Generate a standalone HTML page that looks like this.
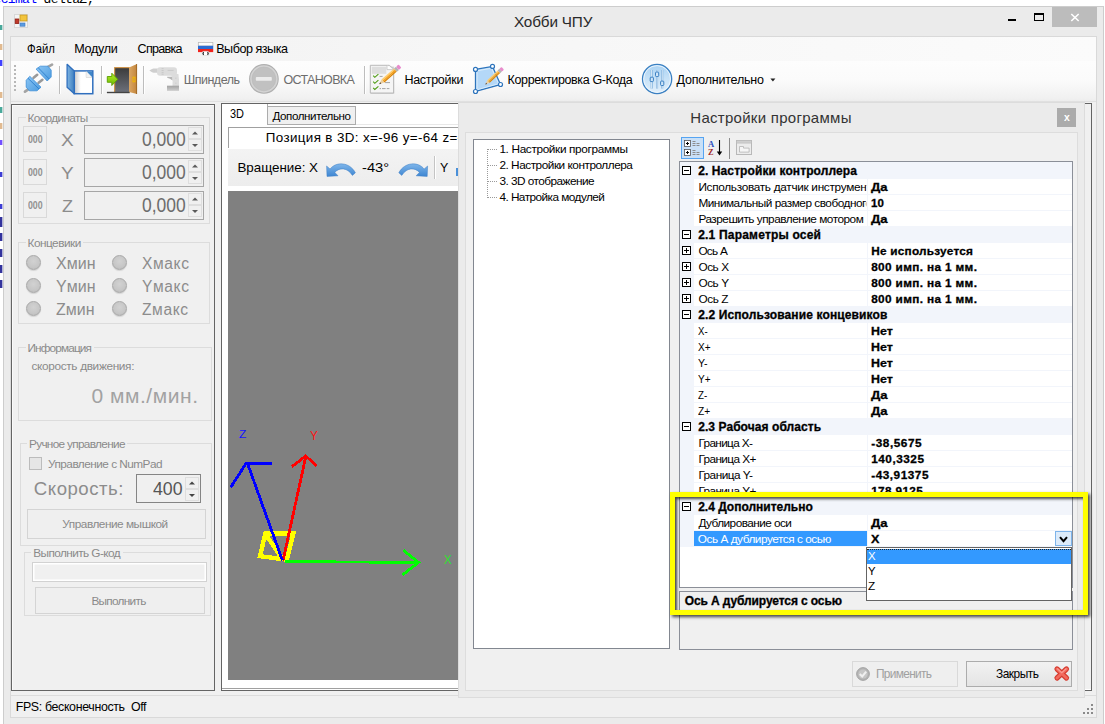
<!DOCTYPE html>
<html lang="ru"><head><meta charset="utf-8"><title>Хобби ЧПУ</title>
<style>
html,body{margin:0;padding:0}
body{width:1105px;height:724px;overflow:hidden;background:#fff;position:relative;font-family:"Liberation Sans",sans-serif}
.a{position:absolute;box-sizing:border-box}
.t{position:absolute;white-space:pre;line-height:1}
.gb{position:absolute;box-sizing:border-box;border:1px solid #dcdcdc}
.lbl{position:absolute;background:#f0f0f0;height:12px}
svg{position:absolute;overflow:visible}
</style></head>
<body>
<span class="t" style='left:-6.5px;top:-7px;font-size:13px;color:#0000ff;font-family:"Liberation Mono", monospace;letter-spacing:-0.65px;'>ecimal</span>
<span class="t" style='left:43.6px;top:-7px;font-size:13px;color:#000;font-family:"Liberation Mono", monospace;letter-spacing:-0.65px;'>deltaZ;</span>
<div class="a" style="left:0px;top:25px;width:2px;height:5px;background:#2a9a8a;opacity:.85"></div>
<div class="a" style="left:2px;top:25px;width:1px;height:5px;background:#2a9a8a;opacity:.3"></div>
<div class="a" style="left:0px;top:44px;width:2px;height:6px;background:#dcae7c;opacity:.85"></div>
<div class="a" style="left:2px;top:44px;width:1px;height:6px;background:#dcae7c;opacity:.3"></div>
<div class="a" style="left:0px;top:60px;width:2px;height:6px;background:#2020ff;opacity:.85"></div>
<div class="a" style="left:2px;top:60px;width:1px;height:6px;background:#2020ff;opacity:.3"></div>
<div class="a" style="left:0px;top:92px;width:2px;height:6px;background:#dcae7c;opacity:.85"></div>
<div class="a" style="left:2px;top:92px;width:1px;height:6px;background:#dcae7c;opacity:.3"></div>
<div class="a" style="left:0px;top:107px;width:2px;height:6px;background:#2a9a8a;opacity:.85"></div>
<div class="a" style="left:2px;top:107px;width:1px;height:6px;background:#2a9a8a;opacity:.3"></div>
<div class="a" style="left:0px;top:123px;width:2px;height:6px;background:#dcae7c;opacity:.85"></div>
<div class="a" style="left:2px;top:123px;width:1px;height:6px;background:#dcae7c;opacity:.3"></div>
<div class="a" style="left:0px;top:140px;width:2px;height:5px;background:#5a30ff;opacity:.85"></div>
<div class="a" style="left:2px;top:140px;width:1px;height:5px;background:#5a30ff;opacity:.3"></div>
<div class="a" style="left:0px;top:172px;width:2px;height:5px;background:#1c1ccc;opacity:.85"></div>
<div class="a" style="left:2px;top:172px;width:1px;height:5px;background:#1c1ccc;opacity:.3"></div>
<div class="a" style="left:0px;top:204px;width:2px;height:5px;background:#1c1ccc;opacity:.85"></div>
<div class="a" style="left:2px;top:204px;width:1px;height:5px;background:#1c1ccc;opacity:.3"></div>
<div class="a" style="left:0px;top:217px;width:2px;height:10px;background:#10108c;opacity:.85"></div>
<div class="a" style="left:2px;top:217px;width:1px;height:10px;background:#10108c;opacity:.3"></div>
<div class="a" style="left:0px;top:233px;width:2px;height:8px;background:#10108c;opacity:.85"></div>
<div class="a" style="left:2px;top:233px;width:1px;height:8px;background:#10108c;opacity:.3"></div>
<div class="a" style="left:0px;top:249px;width:2px;height:8px;background:#10108c;opacity:.85"></div>
<div class="a" style="left:2px;top:249px;width:1px;height:8px;background:#10108c;opacity:.3"></div>
<div class="a" style="left:0px;top:265px;width:2px;height:8px;background:#10108c;opacity:.85"></div>
<div class="a" style="left:2px;top:265px;width:1px;height:8px;background:#10108c;opacity:.3"></div>
<div class="a" style="left:0px;top:280px;width:2px;height:8px;background:#10108c;opacity:.85"></div>
<div class="a" style="left:2px;top:280px;width:1px;height:8px;background:#10108c;opacity:.3"></div>
<div class="a" style="left:3px;top:6px;width:1101px;height:730px;background:#ebebeb;border:1px solid #cdcdcd"></div>
<svg style="left:14px;top:14px" width="14" height="14" viewBox="0 0 14 14">
<rect x="0.5" y="0.5" width="13" height="13" fill="#f4f4f4" stroke="#d8d8d8"/>
<rect x="6" y="1" width="7" height="6" fill="#f2c43c" stroke="#c89a20" stroke-width=".8"/>
<rect x="1.2" y="5" width="3.6" height="4.5" fill="#c0392b" stroke="#8e1c12" stroke-width=".8"/>
<rect x="6" y="9" width="5" height="3.2" fill="#5b9be0" stroke="#3a78c4" stroke-width=".6"/>
</svg>
<span class="t" style='left:514.0px;top:14px;font-size:15.3px;color:#2a2a2a;letter-spacing:-0.17px;'>Хобби ЧПУ</span>
<div class="a" style="left:1008px;top:19px;width:8px;height:2px;background:#000"></div>
<div class="a" style="left:1034px;top:13px;width:10px;height:8px;border:1px solid #000;border-top-width:2px"></div>
<div class="a" style="left:1052px;top:7px;width:45px;height:20px;background:#bcbcbc"></div>
<svg style="left:1071px;top:14px" width="8" height="7" viewBox="0 0 8 7"><path d="M0.3 0 L7.7 7 M7.7 0 L0.3 7" stroke="#fff" stroke-width="1.6" fill="none"/></svg>
<div class="a" style="left:10px;top:36px;width:1087px;height:682px;background:#f0f0f0;border:1px solid #d9d9d9"></div>
<div class="a" style="left:11px;top:37px;width:1085px;height:24px;background:linear-gradient(90deg,#f1f1f1,#f6f6f6 40%,#fbfbfb)"></div>
<span class="t" style='left:26.6px;top:43px;font-size:12.6px;color:#000;transform-origin:0 50%;transform:scaleX(0.901);'>Файл</span>
<span class="t" style='left:74.3px;top:43px;font-size:12.6px;color:#000;letter-spacing:-0.33px;'>Модули</span>
<span class="t" style='left:137.6px;top:43px;font-size:12.6px;color:#000;letter-spacing:-0.75px;'>Справка</span>
<span class="t" style='left:216.2px;top:43px;font-size:12.6px;color:#000;letter-spacing:-0.48px;'>Выбор языка</span>
<svg style="left:0;top:0" width="1105" height="724" viewBox="0 0 1105 724">
<rect x="198.3" y="42.4" width="14.6" height="3.6" fill="#fcfcfc" stroke="#b4b4b4" stroke-width=".7"/>
<rect x="198" y="45.8" width="15.2" height="3.3" fill="#2b6bd2"/>
<rect x="198" y="49" width="15.2" height="3.1" fill="#f0221c"/>
<rect x="202.4" y="51.3" width="6.4" height="4.2" rx="1" fill="#fff" stroke="#c8c8c8" stroke-width=".4"/>
<path d="M203.6 52 q-1.2 1.4 0 2.8 M207.6 52 q1.2 1.4 0 2.8" stroke="#111" stroke-width="1.1" fill="none"/>
</svg>
<div class="a" style="left:11px;top:61px;width:1085px;height:41px;background:linear-gradient(#fdfdfd 0%,#fbfbfb 45%,#f1f1f1 90%,#ebebeb 100%)"></div>
<div class="a" style="left:11px;top:101px;width:1085px;height:1px;background:#e0e0e0"></div>
<div class="a" style="left:14px;top:65px;width:2px;height:2px;background:#b8b8b8"></div>
<div class="a" style="left:14px;top:69px;width:2px;height:2px;background:#b8b8b8"></div>
<div class="a" style="left:14px;top:73px;width:2px;height:2px;background:#b8b8b8"></div>
<div class="a" style="left:14px;top:77px;width:2px;height:2px;background:#b8b8b8"></div>
<div class="a" style="left:14px;top:81px;width:2px;height:2px;background:#b8b8b8"></div>
<div class="a" style="left:14px;top:85px;width:2px;height:2px;background:#b8b8b8"></div>
<div class="a" style="left:14px;top:89px;width:2px;height:2px;background:#b8b8b8"></div>
<div class="a" style="left:59px;top:66px;width:1px;height:28px;background:#bdbdbd"></div>
<div class="a" style="left:60px;top:66px;width:1px;height:28px;background:#fff"></div>
<div class="a" style="left:101px;top:66px;width:1px;height:28px;background:#bdbdbd"></div>
<div class="a" style="left:102px;top:66px;width:1px;height:28px;background:#fff"></div>
<div class="a" style="left:143px;top:66px;width:1px;height:28px;background:#bdbdbd"></div>
<div class="a" style="left:144px;top:66px;width:1px;height:28px;background:#fff"></div>
<div class="a" style="left:364px;top:66px;width:1px;height:28px;background:#bdbdbd"></div>
<div class="a" style="left:365px;top:66px;width:1px;height:28px;background:#fff"></div>
<svg style="left:0;top:0" width="1105" height="724" viewBox="0 0 1105 724">
<defs>
<linearGradient id="gbl" x1="0" y1="0" x2="1" y2="1"><stop offset="0" stop-color="#8cc6f4"/><stop offset="1" stop-color="#4a9be0"/></linearGradient>
<linearGradient id="gcov" x1="0" y1="0" x2="1" y2="0"><stop offset="0" stop-color="#7db4e2"/><stop offset="1" stop-color="#3f7fbf"/></linearGradient>
<linearGradient id="gpage" x1="0" y1="0" x2="1" y2="0"><stop offset="0" stop-color="#c9c9c9"/><stop offset=".35" stop-color="#fff"/><stop offset="1" stop-color="#fff"/></linearGradient>
<linearGradient id="gdark" x1="0" y1="0" x2="0" y2="1"><stop offset="0" stop-color="#3c3c3c"/><stop offset="1" stop-color="#6c707a"/></linearGradient>
<linearGradient id="gdoor" x1="0" y1="0" x2="1" y2="0"><stop offset="0" stop-color="#dba662"/><stop offset=".8" stop-color="#c88c44"/><stop offset="1" stop-color="#a86e28"/></linearGradient>
<linearGradient id="ggrn" x1="0" y1="0" x2="0" y2="1"><stop offset="0" stop-color="#b6ee2a"/><stop offset="1" stop-color="#6bb800"/></linearGradient>
<linearGradient id="gbat" x1="0" y1="0" x2="0" y2="1"><stop offset="0" stop-color="#a2a2a2"/><stop offset="1" stop-color="#cfcfcf"/></linearGradient>
<linearGradient id="gstop" x1="0" y1="0" x2="0" y2="1"><stop offset="0" stop-color="#cfcfcf"/><stop offset="1" stop-color="#bcbcbc"/></linearGradient>
<linearGradient id="gcirc" x1="0" y1="0" x2="0" y2="1"><stop offset="0" stop-color="#a9d2f3"/><stop offset="1" stop-color="#e4f1fb"/></linearGradient>
</defs>
<!-- plug -->
<g>
<path d="M48.4 66.6 L52 64.6" stroke="#a4a4a4" stroke-width="2.8" stroke-linecap="round"/>
<path d="M25 91.6 L28.2 89.4" stroke="#a4a4a4" stroke-width="2.8" stroke-linecap="round"/>
<path d="M33.6 77.8 L37.2 74.8 M38.6 82.8 L42.4 79.8" stroke="#9a9a9a" stroke-width="2.6" stroke-linecap="round"/>
<polygon points="36.1,69.1 40.3,66.2 47.9,66.2 51.2,70.1 51.2,77 47.2,81" fill="url(#gbl)" stroke="#3f8fd8" stroke-width=".8"/>
<path d="M38.3 67.8 L49.2 79" stroke="#2f7fcc" stroke-width=".9"/>
<polygon points="29.8,76.3 41,87.2 37,90.8 29.4,90.8 26.2,87.2 26.2,80.3" fill="url(#gbl)" stroke="#3f8fd8" stroke-width=".8"/>
<path d="M28 78.3 L39 89" stroke="#2f7fcc" stroke-width=".9"/>
</g>
<!-- book/page -->
<g>
<rect x="74.3" y="70.9" width="18.5" height="22.8" fill="url(#gpage)" stroke="#2f6fbe" stroke-width="1.5"/>
<polygon points="86.3,71.6 92.1,71.6 92.1,77.4" fill="#3f86c8"/>
<path d="M86.3 71.6 V77.4 H92.1" fill="#f4f4f4" stroke="#b8b8b8" stroke-width=".7"/>
<polygon points="86.3,71.6 92.1,77.4 86.3,77.4" fill="#f2f2f2"/>
<polygon points="67.1,64.3 74.3,70.9 74.3,93.7 67.1,87.2" fill="url(#gcov)" stroke="#2f6fbe" stroke-width="1.3" stroke-linejoin="round"/>
</g>
<!-- door -->
<g>
<rect x="114.1" y="67.1" width="15.6" height="25" fill="#c8893a"/>
<rect x="115.2" y="68.2" width="13.8" height="24" fill="url(#gdark)"/>
<polygon points="129,67.6 137,64 137,94 129,91.9" fill="url(#gdoor)"/>
<path d="M136.6 64 V94" stroke="#a06a28" stroke-width=".9"/>
<rect x="133" y="77.2" width="2" height="4.6" fill="none" stroke="#f2b800" stroke-width="1"/>
<path d="M106.9 92.5 H129.7" stroke="#444" stroke-width="1.4"/>
<polygon points="107.3,76.5 111.8,76.5 111.8,73.2 117.8,79.3 111.8,85.5 111.8,82.3 107.3,82.3" fill="url(#ggrn)" stroke="#5a9e00" stroke-width=".9" stroke-linejoin="round"/>
</g>
<!-- drill -->
<g>
<polygon points="149.3,70.5 152,69 153.6,68.4 157.5,68.4 157.5,72.8 153.6,72.8 152,72.2" fill="#cfcfcf"/>
<rect x="157" y="67.2" width="20" height="8.6" rx="3" fill="#dcdcdc"/>
<path d="M171.4 74 H178.4 Q179.4 80 179 86.2 H172.5 Q173.5 80 171.4 75 Z" fill="#dcdcdc"/>
<path d="M167.2 76.8 H172 L172.6 80.4 Q170 78.4 167.2 77.8 Z" fill="#b6b6b6"/>
<rect x="167" y="85.7" width="12" height="5.2" fill="url(#gbat)"/>
<path d="M161.6 68.6 h2 M161.6 70.5 h2 M161.6 72.4 h2 M161.6 74.2 h2 M167.6 70.4 h6" stroke="#c4c4c4" stroke-width=".8"/>
<path d="M175 78.2 h1.6 M175 83.2 h1.6" stroke="#c8c8c8" stroke-width=".7"/>
</g>
<!-- stop -->
<g>
<circle cx="263.9" cy="78.9" r="14.3" fill="#d3d3d3" stroke="#b0b0b0" stroke-width="1.1"/>
<circle cx="263.9" cy="78.9" r="11.9" fill="#c1c1c1" stroke="#bababa" stroke-width=".6"/>
<rect x="255.8" y="77.1" width="16" height="3.7" rx=".8" fill="#ececec"/>
</g>
<!-- settings (checklist + pencil) -->
<g>
<rect x="370.6" y="66.6" width="23.6" height="27.2" fill="#a8a8a8" opacity=".45"/>
<path d="M370.3 65.3 H389.3 L393.6 69 V93 H370.3 Z" fill="#f5f5f5" stroke="#b2b2b2" stroke-width=".9"/>
<rect x="371.8" y="66.8" width="14.5" height="7" fill="#dedede"/>
<path d="M387 65.6 V69.6 H393" fill="#fff" stroke="#bdbdbd" stroke-width=".7"/>
<path d="M373.2 75.6 l1.6 1.7 l3.6 -3.2 M373.2 81.6 l1.6 1.7 l3.6 -3.2 M373.2 87.8 l1.6 1.7 l3.6 -3.2" stroke="#4e9c12" stroke-width="1.1" fill="none"/>
<path d="M379.6 76.4 h3 M385 82.6 h5 M379.6 88.6 h1.4 M382 88.6 h3.6 M386.8 88.6 h2.6" stroke="#9a9a9a" stroke-width=".9"/>
<g transform="translate(379.2,84.3) rotate(-41.2) scale(1.03)">
<polygon points="0,0 5,-2 5,2" fill="#ecd0a0"/><polygon points="0,0 2,-0.8 2,0.8" fill="#4a3a2a"/>
<rect x="5" y="-2" width="16" height="1.4" fill="#ffcc6a"/><rect x="5" y="-0.6" width="16" height="1.4" fill="#f7a11a"/><rect x="5" y="0.8" width="16" height="1.2" fill="#d98200"/>
<rect x="21" y="-2.1" width="2.6" height="4.2" fill="#b4b4b4"/><rect x="23.6" y="-2.1" width="3.3" height="4.2" rx="1" fill="#e88ccc"/>
</g>
</g>
<!-- polygon + pencil -->
<g>
<polygon points="475.5,69.4 492.5,66.4 500.5,84.5 475.5,91.5" fill="#b4d8f8" stroke="#2d74bc" stroke-width="1.3"/>
<polygon points="477,70.8 491.6,68.2 498.6,83.8 477,89.8" fill="none" stroke="#e4f2fd" stroke-width=".8"/>
<g fill="#fff" stroke="#2d74bc" stroke-width="1.2"><circle cx="475.5" cy="69.4" r="2"/><circle cx="492.5" cy="66.4" r="2"/><circle cx="500.5" cy="84.5" r="2"/><circle cx="475.5" cy="91.5" r="2"/></g>
<g transform="translate(485.3,84.6) rotate(-43.2) scale(0.89)">
<polygon points="0,0 5,-2 5,2" fill="#ecd0a0"/><polygon points="0,0 2,-0.8 2,0.8" fill="#4a3a2a"/>
<rect x="5" y="-2" width="16" height="1.4" fill="#ffcc6a"/><rect x="5" y="-0.6" width="16" height="1.4" fill="#f7a11a"/><rect x="5" y="0.8" width="16" height="1.2" fill="#d98200"/>
<rect x="21" y="-2.1" width="2.6" height="4.2" fill="#b4b4b4"/><rect x="23.6" y="-2.1" width="3.3" height="4.2" rx="1" fill="#e88ccc"/>
</g>
</g>
<!-- sliders circle -->
<g>
<circle cx="657.1" cy="79" r="14.6" fill="url(#gcirc)" stroke="#3b80c2" stroke-width="1.3"/>
<circle cx="657.1" cy="79" r="13.4" fill="none" stroke="#eef6fd" stroke-width=".9"/>
<path d="M651.7 70 V88.6 M657.1 70 V88.6 M662.2 70 V88.6" stroke="#5b9bd4" stroke-width="1.9"/>
<path d="M651.7 70 V88.6 M657.1 70 V88.6 M662.2 70 V88.6" stroke="#fff" stroke-width=".9"/>
<g fill="#cfe5f8" stroke="#3b80c2" stroke-width="1"><rect x="650.2" y="77.2" width="3.2" height="4.4" rx=".8"/><rect x="655.5" y="72.1" width="3.2" height="4.4" rx=".8"/><rect x="660.6" y="81.1" width="3.2" height="4.4" rx=".8"/></g>
</g>
<!-- dropdown arrow -->
<polygon points="770.4,78.6 775.4,78.6 772.9,81.4" fill="#222"/>
</svg>
<span class="t" style='left:183.8px;top:74px;font-size:12.5px;color:#6d6d6d;letter-spacing:-0.51px;'>Шпиндель</span>
<span class="t" style='left:283.5px;top:74px;font-size:12.5px;color:#6d6d6d;letter-spacing:-0.66px;'>ОСТАНОВКА</span>
<span class="t" style='left:404.4px;top:74px;font-size:12.5px;color:#000;letter-spacing:-0.29px;'>Настройки</span>
<span class="t" style='left:507.6px;top:74px;font-size:12.5px;color:#000;letter-spacing:-0.38px;'>Корректировка G-Кода</span>
<span class="t" style='left:676.5px;top:74px;font-size:12.5px;color:#000;letter-spacing:-0.21px;'>Дополнительно</span>
<div class="a" style="left:11px;top:104px;width:204px;height:587px;background:#f0f0f0;border:1px solid #646464;box-shadow:inset 1px 1px 0 #fafafa"></div>
<div class="gb" style="left:18px;top:117px;width:192px;height:107px"></div>
<div class="lbl" style="left:25.5px;top:112px;width:64.8px"></div>
<span class="t" style='left:27.5px;top:113px;font-size:11.8px;color:#8a8a8a;letter-spacing:-0.63px;'>Координаты</span>
<div class="a" style="left:23px;top:126px;width:24px;height:26px;border:1px solid #d9d9d9;background:#f0f0f0"></div>
<span class="t" style='left:27.6px;top:134px;font-size:11px;color:#909090;font-weight:bold;transform-origin:0 50%;transform:scaleX(0.795);'>000</span>
<span class="t" style='left:61.0px;top:132px;font-size:17px;color:#8c8c8c;transform-origin:0 50%;transform:scaleX(1.120);'>X</span>
<div class="a" style="left:84px;top:125px;width:120px;height:29px;border:1px solid #a6a6a6;background:#f0f0f0"></div>
<span class="t" style='left:141.5px;top:130px;font-size:19.6px;color:#6d6d6d;transform-origin:0 50%;transform:scaleX(0.893);'>0,000</span>
<div class="a" style="left:188px;top:127px;width:14px;height:12px;border:1px solid #dedede;background:#f0f0f0"></div>
<div class="a" style="left:188px;top:139px;width:14px;height:12px;border:1px solid #dedede;background:#f0f0f0"></div>
<svg style="left:192px;top:130.6px" width="6" height="18" viewBox="0 0 6 18"><polygon points="0,3.4 6,3.4 3,0.4" fill="#5a5a5a"/><polygon points="0,13 6,13 3,16" fill="#5a5a5a"/></svg>
<div class="a" style="left:23px;top:159px;width:24px;height:26px;border:1px solid #d9d9d9;background:#f0f0f0"></div>
<span class="t" style='left:27.6px;top:167px;font-size:11px;color:#909090;font-weight:bold;transform-origin:0 50%;transform:scaleX(0.795);'>000</span>
<span class="t" style='left:61.0px;top:165px;font-size:17px;color:#8c8c8c;transform-origin:0 50%;transform:scaleX(1.120);'>Y</span>
<div class="a" style="left:84px;top:158px;width:120px;height:29px;border:1px solid #a6a6a6;background:#f0f0f0"></div>
<span class="t" style='left:141.5px;top:163px;font-size:19.6px;color:#6d6d6d;transform-origin:0 50%;transform:scaleX(0.893);'>0,000</span>
<div class="a" style="left:188px;top:160px;width:14px;height:12px;border:1px solid #dedede;background:#f0f0f0"></div>
<div class="a" style="left:188px;top:172px;width:14px;height:12px;border:1px solid #dedede;background:#f0f0f0"></div>
<svg style="left:192px;top:163.6px" width="6" height="18" viewBox="0 0 6 18"><polygon points="0,3.4 6,3.4 3,0.4" fill="#5a5a5a"/><polygon points="0,13 6,13 3,16" fill="#5a5a5a"/></svg>
<div class="a" style="left:23px;top:192px;width:24px;height:26px;border:1px solid #d9d9d9;background:#f0f0f0"></div>
<span class="t" style='left:27.6px;top:200px;font-size:11px;color:#909090;font-weight:bold;transform-origin:0 50%;transform:scaleX(0.795);'>000</span>
<span class="t" style='left:62.0px;top:198px;font-size:17px;color:#8c8c8c;transform-origin:0 50%;transform:scaleX(1.059);'>Z</span>
<div class="a" style="left:84px;top:191px;width:120px;height:29px;border:1px solid #a6a6a6;background:#f0f0f0"></div>
<span class="t" style='left:141.5px;top:196px;font-size:19.6px;color:#6d6d6d;transform-origin:0 50%;transform:scaleX(0.893);'>0,000</span>
<div class="a" style="left:188px;top:193px;width:14px;height:12px;border:1px solid #dedede;background:#f0f0f0"></div>
<div class="a" style="left:188px;top:205px;width:14px;height:12px;border:1px solid #dedede;background:#f0f0f0"></div>
<svg style="left:192px;top:196.6px" width="6" height="18" viewBox="0 0 6 18"><polygon points="0,3.4 6,3.4 3,0.4" fill="#5a5a5a"/><polygon points="0,13 6,13 3,16" fill="#5a5a5a"/></svg>
<div class="gb" style="left:18px;top:242px;width:192px;height:82px"></div>
<div class="lbl" style="left:25.5px;top:237px;width:57.8px"></div>
<span class="t" style='left:27.5px;top:238px;font-size:11.8px;color:#8a8a8a;letter-spacing:-0.49px;'>Концевики</span>
<div class="a" style="left:26px;top:255px;width:15px;height:15px;border-radius:50%;background:radial-gradient(circle at 50% 40%,#d2d2d2 0%,#c6c6c6 60%,#b4b4b4 100%);border:1px solid #a8a8a8;box-shadow:0 1px 1px rgba(0,0,0,.12)"></div>
<span class="t" style='left:56.0px;top:256px;font-size:15.6px;color:#8c8c8c;transform-origin:0 50%;transform:scaleX(1.027);'>Xмин</span>
<div class="a" style="left:112px;top:255px;width:15px;height:15px;border-radius:50%;background:radial-gradient(circle at 50% 40%,#d2d2d2 0%,#c6c6c6 60%,#b4b4b4 100%);border:1px solid #a8a8a8;box-shadow:0 1px 1px rgba(0,0,0,.12)"></div>
<span class="t" style='left:142.0px;top:256px;font-size:15.6px;color:#8c8c8c;letter-spacing:0.60px;'>Xмакс</span>
<div class="a" style="left:26px;top:278px;width:15px;height:15px;border-radius:50%;background:radial-gradient(circle at 50% 40%,#d2d2d2 0%,#c6c6c6 60%,#b4b4b4 100%);border:1px solid #a8a8a8;box-shadow:0 1px 1px rgba(0,0,0,.12)"></div>
<span class="t" style='left:56.0px;top:279px;font-size:15.6px;color:#8c8c8c;transform-origin:0 50%;transform:scaleX(1.027);'>Yмин</span>
<div class="a" style="left:112px;top:278px;width:15px;height:15px;border-radius:50%;background:radial-gradient(circle at 50% 40%,#d2d2d2 0%,#c6c6c6 60%,#b4b4b4 100%);border:1px solid #a8a8a8;box-shadow:0 1px 1px rgba(0,0,0,.12)"></div>
<span class="t" style='left:142.0px;top:279px;font-size:15.6px;color:#8c8c8c;letter-spacing:0.60px;'>Yмакс</span>
<div class="a" style="left:26px;top:301px;width:15px;height:15px;border-radius:50%;background:radial-gradient(circle at 50% 40%,#d2d2d2 0%,#c6c6c6 60%,#b4b4b4 100%);border:1px solid #a8a8a8;box-shadow:0 1px 1px rgba(0,0,0,.12)"></div>
<span class="t" style='left:56.0px;top:302px;font-size:15.6px;color:#8c8c8c;transform-origin:0 50%;transform:scaleX(1.025);'>Zмин</span>
<div class="a" style="left:112px;top:301px;width:15px;height:15px;border-radius:50%;background:radial-gradient(circle at 50% 40%,#d2d2d2 0%,#c6c6c6 60%,#b4b4b4 100%);border:1px solid #a8a8a8;box-shadow:0 1px 1px rgba(0,0,0,.12)"></div>
<span class="t" style='left:142.0px;top:302px;font-size:15.6px;color:#8c8c8c;letter-spacing:0.57px;'>Zмакс</span>
<div class="gb" style="left:18px;top:347px;width:194px;height:74px"></div>
<div class="lbl" style="left:25.5px;top:342px;width:68.5px"></div>
<span class="t" style='left:27.5px;top:343px;font-size:11.8px;color:#8a8a8a;letter-spacing:-0.86px;'>Информация</span>
<span class="t" style='left:31.5px;top:361px;font-size:11.8px;color:#8a8a8a;letter-spacing:-0.33px;'>скорость движения:</span>
<span class="t" style='left:91.4px;top:385px;font-size:21px;color:#a2a2a2;letter-spacing:0.55px;'>0 мм./мин.</span>
<div class="gb" style="left:20px;top:443px;width:192px;height:103px"></div>
<div class="lbl" style="left:27px;top:438px;width:100.4px"></div>
<span class="t" style='left:29.0px;top:439px;font-size:11.8px;color:#8a8a8a;letter-spacing:-0.68px;'>Ручное управление</span>
<div class="a" style="left:29px;top:457px;width:13px;height:13px;border:1px solid #bcbcbc;background:#e6e6e6"></div>
<span class="t" style='left:48.0px;top:459px;font-size:11.8px;color:#8a8a8a;letter-spacing:-0.52px;'>Управление с NumPad</span>
<span class="t" style='left:33.8px;top:480px;font-size:18.6px;color:#8c8c8c;letter-spacing:0.53px;'>Скорость:</span>
<div class="a" style="left:136px;top:474px;width:65px;height:29px;border:1px solid #858585;background:#f0f0f0"></div>
<span class="t" style='left:153.0px;top:480px;font-size:18.6px;color:#555;transform-origin:0 50%;transform:scaleX(0.954);'>400</span>
<div class="a" style="left:185px;top:477px;width:14px;height:12px;border:1px solid #dedede;background:#f0f0f0"></div>
<div class="a" style="left:185px;top:489px;width:14px;height:12px;border:1px solid #dedede;background:#f0f0f0"></div>
<svg style="left:189px;top:480.6px" width="6" height="18" viewBox="0 0 6 18"><polygon points="0,3.4 6,3.4 3,0.4" fill="#444"/><polygon points="0,13 6,13 3,16" fill="#444"/></svg>
<div class="a" style="left:27px;top:509px;width:179px;height:30px;border:1px solid #d4d4d4;background:#efefef"></div>
<span class="t" style='left:62.3px;top:519px;font-size:11.8px;color:#8a8a8a;letter-spacing:-0.47px;'>Управление мышкой</span>
<div class="gb" style="left:24px;top:552px;width:187px;height:64px"></div>
<div class="lbl" style="left:31.2px;top:547px;width:91.4px"></div>
<span class="t" style='left:33.2px;top:548px;font-size:11.8px;color:#8a8a8a;letter-spacing:-0.57px;'>Выполнить G-код</span>
<div class="a" style="left:32px;top:562px;width:175px;height:20px;border:1px solid #d2d2d2;background:#f0f0f0;box-shadow:inset 0 0 0 1.5px #fff"></div>
<div class="a" style="left:35px;top:587px;width:170px;height:27px;border:1px solid #d4d4d4;background:#efefef"></div>
<span class="t" style='left:91.4px;top:596px;font-size:11.8px;color:#8a8a8a;letter-spacing:-0.71px;'>Выполнить</span>
<div class="a" style="left:11px;top:695px;width:1085px;height:1px;background:#dcdcdc"></div>
<span class="t" style='left:15.7px;top:701px;font-size:12.4px;color:#000;letter-spacing:-0.35px;'>FPS: бесконечность  Off</span>
<svg style="left:1083px;top:703px" width="11" height="12" viewBox="0 0 11 12"><rect x="8" y="1" width="2" height="2" fill="#8a8a8a"/><rect x="4" y="5" width="2" height="2" fill="#8a8a8a"/><rect x="8" y="5" width="2" height="2" fill="#8a8a8a"/><rect x="0" y="9" width="2" height="2" fill="#8a8a8a"/><rect x="4" y="9" width="2" height="2" fill="#8a8a8a"/><rect x="8" y="9" width="2" height="2" fill="#8a8a8a"/></svg>
<div class="a" style="left:221px;top:103px;width:871px;height:588px;background:#fff;border:1px solid #646464"></div>
<div class="a" style="left:222px;top:688px;width:236px;height:1px;background:#a0a0a0"></div>
<div class="a" style="left:1085px;top:104px;width:6px;height:585px;background:#f0f0f0"></div>
<div class="a" style="left:267px;top:106px;width:89px;height:19px;background:#f0f0f0;border:1px solid #acacac"></div>
<div class="a" style="left:267px;top:104px;width:1px;height:21px;background:#acacac"></div>
<div class="a" style="left:356px;top:124px;width:102px;height:1px;background:#e8e8e8"></div>
<span class="t" style='left:230.0px;top:108px;font-size:12.4px;color:#000;transform-origin:0 50%;transform:scaleX(0.884);'>3D</span>
<span class="t" style='left:272.5px;top:110px;font-size:11.6px;color:#000;letter-spacing:-0.41px;'>Дополнительно</span>
<div class="a" style="left:228px;top:127px;width:600px;height:21px;background:#fff;border-top:1px solid #a0a0a0;border-left:1px solid #a0a0a0"></div>
<span class="t" style='left:265.8px;top:131px;font-size:13.4px;color:#000;letter-spacing:0.36px;'>Позиция в 3D: x=-96 y=-64 z=-20</span>
<div class="a" style="left:228px;top:149px;width:600px;height:37px;background:linear-gradient(#f3f3f3,#ededed)"></div>
<span class="t" style='left:237.4px;top:161px;font-size:13.4px;color:#000;letter-spacing:-0.02px;'>Вращение: X</span>
<span class="t" style='left:362.3px;top:161px;font-size:13.4px;color:#000;transform-origin:0 50%;transform:scaleX(1.100);'>-43°</span>
<span class="t" style='left:439.7px;top:161px;font-size:13.4px;color:#000;transform-origin:0 50%;transform:scaleX(0.929);'>Y</span>
<div class="a" style="left:434px;top:156px;width:1px;height:23px;background:#c4c4c4"></div>
<div class="a" style="left:435px;top:156px;width:1px;height:23px;background:#fff"></div>
<svg style="left:0;top:0" width="1105" height="724" viewBox="0 0 1105 724">
<defs><linearGradient id="garr" x1="0" y1="0" x2="0" y2="1"><stop offset="0" stop-color="#7fb6ea"/><stop offset="1" stop-color="#3e86d2"/></linearGradient></defs>
<path id="arrL" d="M326.6 166 L327 176.4 L338 175.8 L334.8 172.4 C339 167.4 347.4 167.2 352.4 175.4 L355.4 172.8 C349.6 161.8 336 161.4 330 169 Z" fill="url(#garr)" stroke="#3e7fc4" stroke-width=".5"/>
<path d="M427.6 166 L427.2 176.4 L416.2 175.8 L419.4 172.4 C415.2 167.4 406.8 167.2 401.8 175.4 L398.8 172.8 C404.6 161.8 418.2 161.4 424.2 169 Z" fill="url(#garr)" stroke="#3e7fc4" stroke-width=".5"/>
<rect x="456" y="168" width="2" height="8" fill="#4a90d9"/>
</svg>
<div class="a" style="left:228px;top:191px;width:840px;height:489px;background:#808080"></div>
<svg style="left:0;top:0" width="1105" height="724" viewBox="0 0 1105 724" fill="none" stroke-linecap="butt">
<g shape-rendering="crispEdges"><polygon points="265.4,533.4 293.4,533.6 286.8,559.6 260,556.2" stroke="#ffff00" stroke-width="4.4" stroke-linejoin="miter"/>
<path d="M266 535 L283 559.6" stroke="#ffff00" stroke-width="4.4"/>
<path d="M283 560.6 L305.8 456.6 M291.8 466.6 L305.8 456 L316.6 466" stroke="#ff0000" stroke-width="2.8"/>
<path d="M282.4 560.4 L247.4 463.2 M271.8 463.2 L246.2 463.2 L230.8 487.2" stroke="#0000ff" stroke-width="2.8"/>
<path d="M284.6 561.6 L418.4 562.4 M403.4 550.4 L418.6 562.4 L402.6 574.8" stroke="#00ff00" stroke-width="2.8"/></g>
</svg>
<span class="t" style='left:239.0px;top:429px;font-size:11.5px;color:#1414ff;transform-origin:0 50%;transform:scaleX(1.052);'>Z</span>
<span class="t" style='left:309.6px;top:430px;font-size:12.6px;color:#ff1414;transform-origin:0 50%;transform:scaleX(0.928);'>Y</span>
<span class="t" style='left:443.6px;top:554px;font-size:12.6px;color:#2fe02f;transform-origin:0 50%;transform:scaleX(0.904);'>X</span>
<div class="a" style="left:458px;top:102px;width:627px;height:596px;background:#ebebeb;border:1px solid #dcdcdc"></div>
<div class="a" style="left:465px;top:132px;width:613px;height:559px;background:#f0f0f0;border:1px solid #dddddd"></div>
<span class="t" style='left:690.3px;top:110px;font-size:15px;color:#333;letter-spacing:0.28px;'>Настройки программы</span>
<div class="a" style="left:1057px;top:108px;width:19px;height:19px;background:#ababab"></div>
<span class="t" style='left:1063.6px;top:112px;font-size:11.5px;color:#fff;font-weight:bold;transform-origin:0 50%;transform:scaleX(0.905);'>x</span>
<div class="a" style="left:473px;top:139px;width:197px;height:510px;background:#fff;border:1px solid #828790"></div>
<span class="t" style='left:499.4px;top:144px;font-size:11.8px;color:#000;letter-spacing:-0.35px;'>1. Настройки программы</span>
<div class="a" style="left:488px;top:149px;width:9px;height:1px;background:repeating-linear-gradient(90deg,#9a9a9a 0 1px,transparent 1px 2px)"></div>
<span class="t" style='left:499.4px;top:160px;font-size:11.8px;color:#000;letter-spacing:-0.47px;'>2. Настройки контроллера</span>
<div class="a" style="left:488px;top:165px;width:9px;height:1px;background:repeating-linear-gradient(90deg,#9a9a9a 0 1px,transparent 1px 2px)"></div>
<span class="t" style='left:499.4px;top:176px;font-size:11.8px;color:#000;letter-spacing:-0.53px;'>3. 3D отображение</span>
<div class="a" style="left:488px;top:181px;width:9px;height:1px;background:repeating-linear-gradient(90deg,#9a9a9a 0 1px,transparent 1px 2px)"></div>
<span class="t" style='left:499.4px;top:192px;font-size:11.8px;color:#000;letter-spacing:-0.54px;'>4. Натройка модулей</span>
<div class="a" style="left:488px;top:197px;width:9px;height:1px;background:repeating-linear-gradient(90deg,#9a9a9a 0 1px,transparent 1px 2px)"></div>
<div class="a" style="left:487px;top:149px;width:1px;height:49px;background:repeating-linear-gradient(180deg,#9a9a9a 0 1px,transparent 1px 2px)"></div>
<div class="a" style="left:681px;top:137px;width:23px;height:22px;background:#c9e0f7;border:1px solid #55a4f2"></div>
<svg style="left:0;top:0" width="1105" height="724" viewBox="0 0 1105 724">
<g fill="#fff" stroke="#555" stroke-width=".8"><rect x="684.5" y="140.5" width="6" height="6"/><rect x="684.5" y="149.5" width="6" height="6"/></g>
<path d="M686 143.5 h3 M687.5 142 v3 M686 152.5 h3 M687.5 151 v3" stroke="#000" stroke-width="1"/>
<path d="M692.5 141.5 h4 M692.5 143.5 h8 M692.5 145.5 h8 M692.5 150.5 h4 M692.5 152.5 h8 M692.5 154.5 h8" stroke="#8c8c8c" stroke-width="1" stroke-dasharray="3 1"/>
<path d="M719.5 140 V154" stroke="#000" stroke-width="1.1"/><polygon points="716.8,151.4 722.2,151.4 719.5,155.4" fill="#000"/>
<rect x="729" y="138" width="1" height="21" fill="#8c8c8c"/>
<rect x="736.5" y="140.5" width="15" height="14" fill="#ececec" stroke="#b8b8b8"/><rect x="736.5" y="140.5" width="15" height="2.6" fill="#cfcfcf" stroke="#b8b8b8" stroke-width=".6"/>
<path d="M739.5 146.5 h4 v1.6 h5.6 v4 h-9.6 Z" fill="#f6f6f6" stroke="#b4b4b4" stroke-width=".8"/>
</svg>
<span class="t" style='left:707.8px;top:140px;font-size:9px;color:#2a4fc0;font-weight:bold;font-family:"Liberation Serif", serif;transform-origin:0 50%;transform:scaleX(0.954);'>A</span>
<span class="t" style='left:708.0px;top:148px;font-size:9px;color:#a02828;font-weight:bold;font-family:"Liberation Serif", serif;transform-origin:0 50%;transform:scaleX(0.931);'>Z</span>
<div class="a" style="left:679px;top:161px;width:394px;height:427px;background:#fff;border:1px solid #8b8f98"></div>
<div class="a" style="left:680px;top:162px;width:14px;height:385px;background:#f2f5fb"></div>
<div class="a" style="left:680px;top:162px;width:392px;height:17px;background:#f2f5fb"></div>
<div class="a" style="left:682px;top:166px;width:9px;height:9px;border:1px solid #000;background:#fff"></div><div class="a" style="left:684px;top:170px;width:5px;height:1px;background:#000"></div>
<span class="t" style='left:698.2px;top:165px;font-size:12px;color:#000;font-weight:bold;letter-spacing:0.10px;-webkit-text-stroke:.3px #000;'>2. Настройки контроллера</span>
<div class="a" style="left:694px;top:178px;width:378px;height:1px;background:#f2f5fb"></div>
<div class="a" style="left:867px;top:179px;width:1px;height:15px;background:#f2f5fb"></div>
<span class="t" style='left:698.4px;top:182px;font-size:11.8px;color:#000;letter-spacing:-0.30px;clip-path:inset(-2px 5.0px -2px 0);'>Использовать датчик инструмент</span>
<span class="t" style='left:871.2px;top:182px;font-size:11.8px;color:#000;font-weight:bold;transform-origin:0 50%;transform:scaleX(1.109);-webkit-text-stroke:.3px #000;'>Да</span>
<div class="a" style="left:694px;top:194px;width:378px;height:1px;background:#f2f5fb"></div>
<div class="a" style="left:867px;top:195px;width:1px;height:15px;background:#f2f5fb"></div>
<span class="t" style='left:698.4px;top:198px;font-size:11.8px;color:#000;letter-spacing:-0.48px;clip-path:inset(-2px 5.4px -2px 0);'>Минимальный размер свободного</span>
<span class="t" style='left:871.2px;top:198px;font-size:11.8px;color:#000;font-weight:bold;transform-origin:0 50%;transform:scaleX(0.975);-webkit-text-stroke:.3px #000;'>10</span>
<div class="a" style="left:694px;top:210px;width:378px;height:1px;background:#f2f5fb"></div>
<div class="a" style="left:867px;top:211px;width:1px;height:15px;background:#f2f5fb"></div>
<span class="t" style='left:698.4px;top:214px;font-size:11.8px;color:#000;letter-spacing:-0.49px;'>Разрешить управление мотором</span>
<span class="t" style='left:871.2px;top:214px;font-size:11.8px;color:#000;font-weight:bold;transform-origin:0 50%;transform:scaleX(1.109);-webkit-text-stroke:.3px #000;'>Да</span>
<div class="a" style="left:680px;top:226px;width:392px;height:17px;background:#f2f5fb"></div>
<div class="a" style="left:682px;top:230px;width:9px;height:9px;border:1px solid #000;background:#fff"></div><div class="a" style="left:684px;top:234px;width:5px;height:1px;background:#000"></div>
<span class="t" style='left:698.2px;top:229px;font-size:12px;color:#000;font-weight:bold;letter-spacing:0.20px;-webkit-text-stroke:.3px #000;'>2.1 Параметры осей</span>
<div class="a" style="left:694px;top:242px;width:378px;height:1px;background:#f2f5fb"></div>
<div class="a" style="left:867px;top:243px;width:1px;height:15px;background:#f2f5fb"></div>
<div class="a" style="left:682px;top:246px;width:9px;height:9px;border:1px solid #000;background:#fff"></div><div class="a" style="left:684px;top:250px;width:5px;height:1px;background:#000"></div><div class="a" style="left:686px;top:248px;width:1px;height:5px;background:#000"></div>
<span class="t" style='left:698.4px;top:246px;font-size:11.8px;color:#000;letter-spacing:-0.74px;'>Ось А</span>
<span class="t" style='left:871.2px;top:246px;font-size:11.8px;color:#000;font-weight:bold;letter-spacing:0.24px;-webkit-text-stroke:.3px #000;'>Не используется</span>
<div class="a" style="left:694px;top:258px;width:378px;height:1px;background:#f2f5fb"></div>
<div class="a" style="left:867px;top:259px;width:1px;height:15px;background:#f2f5fb"></div>
<div class="a" style="left:682px;top:262px;width:9px;height:9px;border:1px solid #000;background:#fff"></div><div class="a" style="left:684px;top:266px;width:5px;height:1px;background:#000"></div><div class="a" style="left:686px;top:264px;width:1px;height:5px;background:#000"></div>
<span class="t" style='left:698.4px;top:262px;font-size:11.8px;color:#000;letter-spacing:-0.44px;'>Ось X</span>
<span class="t" style='left:871.2px;top:262px;font-size:11.8px;color:#000;font-weight:bold;letter-spacing:0.35px;-webkit-text-stroke:.3px #000;'>800 имп. на 1 мм.</span>
<div class="a" style="left:694px;top:274px;width:378px;height:1px;background:#f2f5fb"></div>
<div class="a" style="left:867px;top:275px;width:1px;height:15px;background:#f2f5fb"></div>
<div class="a" style="left:682px;top:278px;width:9px;height:9px;border:1px solid #000;background:#fff"></div><div class="a" style="left:684px;top:282px;width:5px;height:1px;background:#000"></div><div class="a" style="left:686px;top:280px;width:1px;height:5px;background:#000"></div>
<span class="t" style='left:698.4px;top:278px;font-size:11.8px;color:#000;letter-spacing:-0.44px;'>Ось Y</span>
<span class="t" style='left:871.2px;top:278px;font-size:11.8px;color:#000;font-weight:bold;letter-spacing:0.35px;-webkit-text-stroke:.3px #000;'>800 имп. на 1 мм.</span>
<div class="a" style="left:694px;top:290px;width:378px;height:1px;background:#f2f5fb"></div>
<div class="a" style="left:867px;top:291px;width:1px;height:15px;background:#f2f5fb"></div>
<div class="a" style="left:682px;top:294px;width:9px;height:9px;border:1px solid #000;background:#fff"></div><div class="a" style="left:684px;top:298px;width:5px;height:1px;background:#000"></div><div class="a" style="left:686px;top:296px;width:1px;height:5px;background:#000"></div>
<span class="t" style='left:698.4px;top:294px;font-size:11.8px;color:#000;letter-spacing:-0.38px;'>Ось Z</span>
<span class="t" style='left:871.2px;top:294px;font-size:11.8px;color:#000;font-weight:bold;letter-spacing:0.35px;-webkit-text-stroke:.3px #000;'>800 имп. на 1 мм.</span>
<div class="a" style="left:680px;top:306px;width:392px;height:17px;background:#f2f5fb"></div>
<div class="a" style="left:682px;top:310px;width:9px;height:9px;border:1px solid #000;background:#fff"></div><div class="a" style="left:684px;top:314px;width:5px;height:1px;background:#000"></div>
<span class="t" style='left:698.2px;top:309px;font-size:12px;color:#000;font-weight:bold;letter-spacing:0.12px;-webkit-text-stroke:.3px #000;'>2.2 Использование концевиков</span>
<div class="a" style="left:694px;top:322px;width:378px;height:1px;background:#f2f5fb"></div>
<div class="a" style="left:867px;top:323px;width:1px;height:15px;background:#f2f5fb"></div>
<span class="t" style='left:698.4px;top:326px;font-size:11.8px;color:#000;transform-origin:0 50%;transform:scaleX(0.814);'>X-</span>
<span class="t" style='left:871.2px;top:326px;font-size:11.8px;color:#000;font-weight:bold;transform-origin:0 50%;transform:scaleX(1.053);-webkit-text-stroke:.3px #000;'>Нет</span>
<div class="a" style="left:694px;top:338px;width:378px;height:1px;background:#f2f5fb"></div>
<div class="a" style="left:867px;top:339px;width:1px;height:15px;background:#f2f5fb"></div>
<span class="t" style='left:698.4px;top:342px;font-size:11.8px;color:#000;transform-origin:0 50%;transform:scaleX(0.853);'>X+</span>
<span class="t" style='left:871.2px;top:342px;font-size:11.8px;color:#000;font-weight:bold;transform-origin:0 50%;transform:scaleX(1.053);-webkit-text-stroke:.3px #000;'>Нет</span>
<div class="a" style="left:694px;top:354px;width:378px;height:1px;background:#f2f5fb"></div>
<div class="a" style="left:867px;top:355px;width:1px;height:15px;background:#f2f5fb"></div>
<span class="t" style='left:698.4px;top:358px;font-size:11.8px;color:#000;transform-origin:0 50%;transform:scaleX(0.896);'>Y-</span>
<span class="t" style='left:871.2px;top:358px;font-size:11.8px;color:#000;font-weight:bold;transform-origin:0 50%;transform:scaleX(1.053);-webkit-text-stroke:.3px #000;'>Нет</span>
<div class="a" style="left:694px;top:370px;width:378px;height:1px;background:#f2f5fb"></div>
<div class="a" style="left:867px;top:371px;width:1px;height:15px;background:#f2f5fb"></div>
<span class="t" style='left:698.4px;top:374px;font-size:11.8px;color:#000;transform-origin:0 50%;transform:scaleX(0.853);'>Y+</span>
<span class="t" style='left:871.2px;top:374px;font-size:11.8px;color:#000;font-weight:bold;transform-origin:0 50%;transform:scaleX(1.053);-webkit-text-stroke:.3px #000;'>Нет</span>
<div class="a" style="left:694px;top:386px;width:378px;height:1px;background:#f2f5fb"></div>
<div class="a" style="left:867px;top:387px;width:1px;height:15px;background:#f2f5fb"></div>
<span class="t" style='left:698.4px;top:390px;font-size:11.8px;color:#000;transform-origin:0 50%;transform:scaleX(0.826);'>Z-</span>
<span class="t" style='left:871.2px;top:390px;font-size:11.8px;color:#000;font-weight:bold;transform-origin:0 50%;transform:scaleX(1.109);-webkit-text-stroke:.3px #000;'>Да</span>
<div class="a" style="left:694px;top:402px;width:378px;height:1px;background:#f2f5fb"></div>
<div class="a" style="left:867px;top:403px;width:1px;height:15px;background:#f2f5fb"></div>
<span class="t" style='left:698.4px;top:406px;font-size:11.8px;color:#000;transform-origin:0 50%;transform:scaleX(0.865);'>Z+</span>
<span class="t" style='left:871.2px;top:406px;font-size:11.8px;color:#000;font-weight:bold;transform-origin:0 50%;transform:scaleX(1.109);-webkit-text-stroke:.3px #000;'>Да</span>
<div class="a" style="left:680px;top:418px;width:392px;height:17px;background:#f2f5fb"></div>
<div class="a" style="left:682px;top:422px;width:9px;height:9px;border:1px solid #000;background:#fff"></div><div class="a" style="left:684px;top:426px;width:5px;height:1px;background:#000"></div>
<span class="t" style='left:698.2px;top:421px;font-size:12px;color:#000;font-weight:bold;letter-spacing:0.07px;-webkit-text-stroke:.3px #000;'>2.3 Рабочая область</span>
<div class="a" style="left:694px;top:434px;width:378px;height:1px;background:#f2f5fb"></div>
<div class="a" style="left:867px;top:435px;width:1px;height:15px;background:#f2f5fb"></div>
<span class="t" style='left:698.4px;top:438px;font-size:11.8px;color:#000;letter-spacing:-0.65px;'>Граница X-</span>
<span class="t" style='left:871.2px;top:438px;font-size:11.8px;color:#000;font-weight:bold;letter-spacing:0.55px;-webkit-text-stroke:.3px #000;'>-38,5675</span>
<div class="a" style="left:694px;top:450px;width:378px;height:1px;background:#f2f5fb"></div>
<div class="a" style="left:867px;top:451px;width:1px;height:15px;background:#f2f5fb"></div>
<span class="t" style='left:698.4px;top:454px;font-size:11.8px;color:#000;letter-spacing:-0.60px;'>Граница X+</span>
<span class="t" style='left:871.2px;top:454px;font-size:11.8px;color:#000;font-weight:bold;letter-spacing:0.51px;-webkit-text-stroke:.3px #000;'>140,3325</span>
<div class="a" style="left:694px;top:466px;width:378px;height:1px;background:#f2f5fb"></div>
<div class="a" style="left:867px;top:467px;width:1px;height:15px;background:#f2f5fb"></div>
<span class="t" style='left:698.4px;top:470px;font-size:11.8px;color:#000;letter-spacing:-0.53px;'>Граница Y-</span>
<span class="t" style='left:871.2px;top:470px;font-size:11.8px;color:#000;font-weight:bold;letter-spacing:0.52px;-webkit-text-stroke:.3px #000;'>-43,91375</span>
<div class="a" style="left:694px;top:482px;width:378px;height:1px;background:#f2f5fb"></div>
<div class="a" style="left:867px;top:483px;width:1px;height:15px;background:#f2f5fb"></div>
<span class="t" style='left:698.4px;top:486px;font-size:11.8px;color:#000;letter-spacing:-0.60px;'>Граница Y+</span>
<span class="t" style='left:871.2px;top:486px;font-size:11.8px;color:#000;font-weight:bold;letter-spacing:0.34px;-webkit-text-stroke:.3px #000;'>178,9125</span>
<div class="a" style="left:680px;top:498px;width:392px;height:17px;background:#f2f5fb"></div>
<div class="a" style="left:682px;top:502px;width:9px;height:9px;border:1px solid #000;background:#fff"></div><div class="a" style="left:684px;top:506px;width:5px;height:1px;background:#000"></div>
<span class="t" style='left:698.2px;top:501px;font-size:12px;color:#000;font-weight:bold;letter-spacing:-0.01px;-webkit-text-stroke:.3px #000;'>2.4 Дополнительно</span>
<div class="a" style="left:694px;top:514px;width:378px;height:1px;background:#f2f5fb"></div>
<div class="a" style="left:867px;top:515px;width:1px;height:15px;background:#f2f5fb"></div>
<span class="t" style='left:698.4px;top:518px;font-size:11.8px;color:#000;letter-spacing:-0.55px;'>Дублирование оси</span>
<span class="t" style='left:871.2px;top:518px;font-size:11.8px;color:#000;font-weight:bold;transform-origin:0 50%;transform:scaleX(1.109);-webkit-text-stroke:.3px #000;'>Да</span>
<div class="a" style="left:694px;top:530px;width:378px;height:1px;background:#f2f5fb"></div>
<div class="a" style="left:867px;top:531px;width:1px;height:15px;background:#f2f5fb"></div>
<div class="a" style="left:694px;top:531px;width:173px;height:15px;background:#3399ff"></div>
<div class="a" style="left:694px;top:546px;width:378px;height:1px;background:#f2f5fb"></div>
<span class="t" style='left:697.8px;top:534px;font-size:11.8px;color:#fff;letter-spacing:-0.46px;'>Ось А дублируется с осью</span>
<span class="t" style='left:871.2px;top:534px;font-size:11.8px;color:#000;font-weight:bold;transform-origin:0 50%;transform:scaleX(1.067);-webkit-text-stroke:.3px #000;'>X</span>
<div class="a" style="left:679px;top:591px;width:394px;height:59px;background:#f0f0f0;border:1px solid #8b8f98"></div>
<span class="t" style='left:684.8px;top:595px;font-size:12px;color:#000;font-weight:bold;letter-spacing:-0.11px;-webkit-text-stroke:.3px #000;'>Ось А дублируется с осью</span>
<div class="a" style="left:1055px;top:531px;width:17px;height:15px;background:#dcebfa;border:1px solid #7eb4ea"></div>
<svg style="left:1059px;top:535.6px" width="9" height="7" viewBox="0 0 9 7"><path d="M1 1.2 L4.5 5.2 L8 1.2" stroke="#000" stroke-width="2" fill="none"/></svg>
<div class="a" style="left:866px;top:547px;width:206px;height:54px;background:#fff;border:1px solid #646464"></div>
<div class="a" style="left:867px;top:549px;width:204px;height:15px;background:#3399ff;border-top:1px dotted #222"></div>
<span class="t" style='left:868.4px;top:551px;font-size:11.4px;color:#fff;transform-origin:0 50%;transform:scaleX(0.999);'>X</span>
<span class="t" style='left:868.4px;top:566px;font-size:11.4px;color:#000;transform-origin:0 50%;transform:scaleX(0.999);'>Y</span>
<span class="t" style='left:868.4px;top:581px;font-size:11.4px;color:#000;transform-origin:0 50%;transform:scaleX(1.033);'>Z</span>
<div class="a" style="left:852px;top:661px;width:106px;height:26px;background:#efefef;border:1px solid #d9d9d9"></div>
<svg style="left:856px;top:667px" width="14" height="14" viewBox="0 0 14 14"><circle cx="7" cy="7" r="6.4" fill="#b4b4b4" stroke="#9a9a9a" stroke-width=".8"/><circle cx="7" cy="7" r="4.6" fill="#c6c6c6"/><path d="M3.8 7 L6.2 9.4 L10.2 4.6" stroke="#f0f0f0" stroke-width="2" fill="none"/></svg>
<span class="t" style='left:876.0px;top:669px;font-size:11.9px;color:#a0a0a0;letter-spacing:-0.68px;'>Применить</span>
<div class="a" style="left:966px;top:661px;width:106px;height:26px;background:linear-gradient(#f2f2f2,#e4e4e4);border:1px solid #acacac"></div>
<span class="t" style='left:996.0px;top:669px;font-size:11.9px;color:#000;letter-spacing:-0.47px;'>Закрыть</span>
<svg style="left:1053.5px;top:665.8px" width="15.5" height="15" viewBox="0 0 15.5 15"><path d="M3 3 L12.5 12 M12.5 3 L3 12" stroke="#d63c30" stroke-width="5.2" stroke-linecap="round"/><path d="M3 3 L12.5 12 M12.5 3 L3 12" stroke="#f26a5e" stroke-width="3" stroke-linecap="round"/><path d="M3.4 2.8 L7.75 6.6 L12.1 2.8" stroke="#f99d94" stroke-width="1.2" fill="none" stroke-linecap="round"/></svg>
<div class="a" style="left:670px;top:492px;width:418px;height:123px;border:5px solid #ffff00;box-shadow:2px 2px 3px rgba(0,0,0,.72),inset 2px 2px 3px rgba(0,0,0,.72)"></div>
</body></html>
